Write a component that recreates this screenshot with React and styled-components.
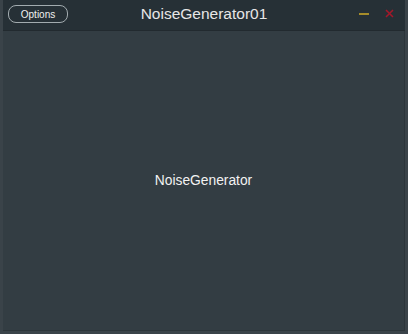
import styled, { createGlobalStyle } from "styled-components";

const Global = createGlobalStyle`
  html, body { margin: 0; padding: 0; background: #3a4349; }
  body { font-family: "Liberation Sans", Arial, sans-serif; }
`;

const Window = styled.div`
  width: 408px;
  height: 334px;
  box-sizing: border-box;
  padding: 0 3px 3px 3px;
  background: #3a4349;
  display: flex;
  flex-direction: column;
`;

const TitleBar = styled.div`
  height: 30px;
  flex: none;
  display: grid;
  grid-template-columns: 1fr auto 1fr;
  align-items: center;
  background: #263036;
  border-bottom: 1px solid #222a2f;
  padding: 0 5px;
`;

const OptionsButton = styled.button`
  justify-self: start;
  height: 18px;
  width: 60px;
  margin-top: -2px;
  border: 1px solid #a2abaf;
  border-radius: 8px;
  background: transparent;
  color: #f0f0f0;
  font-family: "Liberation Sans", Arial, sans-serif;
  font-size: 10px;
  padding: 0;
`;

const Title = styled.div`
  color: #e6e6e6;
  font-size: 15.5px;
  margin-top: -2px;
`;

const Controls = styled.div`
  justify-self: end;
  display: flex;
  align-items: center;
  gap: 16px;
  padding-right: 6px;
  margin-top: -3px;
`;

const Minimize = styled.div`
  width: 10px;
  height: 2px;
  background: #a58c2a;
`;

const Body = styled.div`
  flex: 1;
  background: #333d43;
  display: flex;
  align-items: center;
  justify-content: center;
  border-bottom: 1px solid #2c353a;
  border-right: 1px solid #2c353a;
`;

const Label = styled.div`
  color: #f2f2f2;
  font-size: 13.8px;
`;

export default function App() {
  return (
    <>
      <Global />
      <Window>
        <TitleBar>
          <OptionsButton>Options</OptionsButton>
          <Title>NoiseGenerator01</Title>
          <Controls>
            <Minimize />
            <svg width="9" height="9" viewBox="0 0 9 9">
              <path d="M1 1L8 8M8 1L1 8" stroke="#a3182a" strokeWidth="1.6" />
            </svg>
          </Controls>
        </TitleBar>
        <Body>
          <Label>NoiseGenerator</Label>
        </Body>
      </Window>
    </>
  );
}
